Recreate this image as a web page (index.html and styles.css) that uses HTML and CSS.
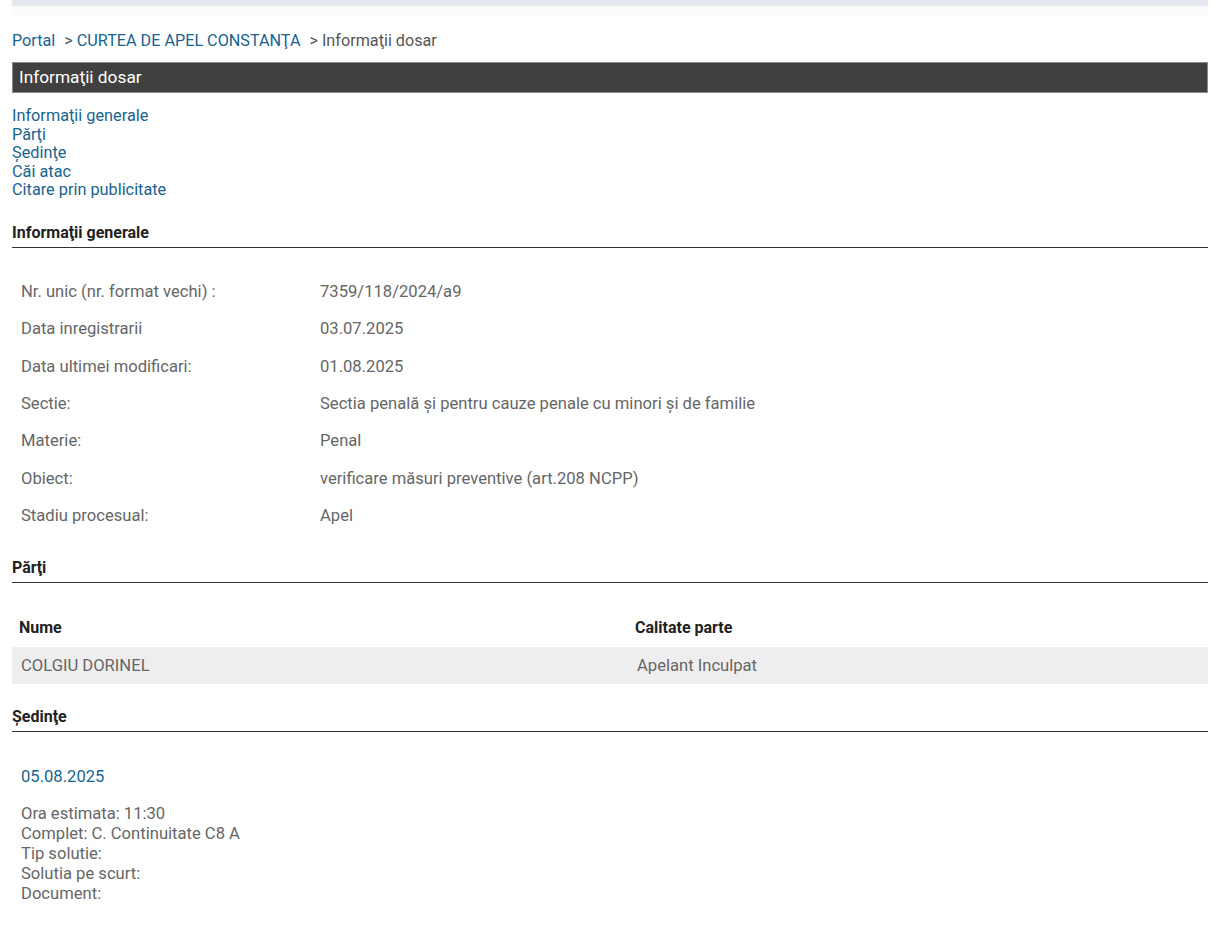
FILE: index.html
```html
<!DOCTYPE html>
<html lang="ro">
<head>
    <meta charset="UTF-8">
    <meta name="viewport" content="width=device-width, initial-scale=1.0">
    <title>Informaţii dosar</title>
    <link rel="stylesheet" href="styles.css">
</head>
<body>
    <div class="top-bar"></div>
    <div class="top-strip"></div>

    <div class="breadcrumb">
        <a href="#">Portal</a>
        <span class="sep">&gt;</span> <a href="#">CURTEA DE APEL CONSTANŢA</a>
        <span class="sep">&gt;</span> <span class="current">Informaţii dosar</span>
    </div>

    <div class="page-title">Informaţii dosar</div>

    <ul class="toc">
        <li><a href="#generale">Informaţii generale</a></li>
        <li><a href="#parti">Părţi</a></li>
        <li><a href="#sedinte">Şedinţe</a></li>
        <li><a href="#cai">Căi atac</a></li>
        <li><a href="#citare">Citare prin publicitate</a></li>
    </ul>

    <!-- Informatii generale -->
    <h3 class="section-title" id="generale">Informaţii generale</h3>
    <table class="info-table">
        <tr><td class="label">Nr. unic (nr. format vechi) :</td><td>7359/118/2024/a9</td></tr>
        <tr><td class="label">Data inregistrarii</td><td>03.07.2025</td></tr>
        <tr><td class="label">Data ultimei modificari:</td><td>01.08.2025</td></tr>
        <tr><td class="label">Sectie:</td><td>Sectia penală și pentru cauze penale cu minori și de familie</td></tr>
        <tr><td class="label">Materie:</td><td>Penal</td></tr>
        <tr><td class="label">Obiect:</td><td>verificare măsuri preventive (art.208 NCPP)</td></tr>
        <tr><td class="label">Stadiu procesual:</td><td>Apel</td></tr>
    </table>

    <!-- Parti -->
    <h3 class="section-title" id="parti">Părţi</h3>
    <table class="parti-table">
        <tr><th>Nume</th><th>Calitate parte</th></tr>
        <tr class="odd"><td>COLGIU DORINEL</td><td>Apelant Inculpat</td></tr>
    </table>

    <!-- Sedinte -->
    <h3 class="section-title" id="sedinte">Şedinţe</h3>
    <div class="sedinta">
        <div class="sedinta-date">05.08.2025</div>
        <div class="sedinta-info">
            Ora estimata: 11:30<br>
            Complet: C. Continuitate C8 A<br>
            Tip solutie:<br>
            Solutia pe scurt:<br>
            Document:
        </div>
    </div>
</body>
</html>
```

FILE: styles.css
```css
body {
    font-family: Roboto, 'Noto Sans', sans-serif;
    font-size: 16px;
    color: #666;
    background-color: #fff;
    margin: 0 12px;
    padding: 0;
}

a {
    color: #17648f;
    text-decoration: none;
}

.top-bar {
    height: 6px;
    background-color: #e4e7ed;
}

.top-strip {
    height: 11px;
    background-color: #fafbfa;
}

.breadcrumb {
    margin-top: 14px;
    line-height: 20px;
    font-size: 16.2px;
}

.breadcrumb .sep {
    margin-left: 5px;
    color: #555;
}

.breadcrumb .current {
    color: #555;
}

.page-title {
    margin-top: 11px;
    height: 29px;
    line-height: 29px;
    background-color: #404040;
    border: 1px solid #8a8a8a;
    color: #fff;
    font-size: 17.3px;
    padding-left: 6px;
}

.toc {
    list-style: none;
    margin: 14px 0 0 0;
    padding: 0;
    line-height: 18.6px;
    font-size: 16.3px;
}

.section-title {
    margin: 23px 0 0 0;
    font-size: 16px;
    font-weight: 700;
    color: #222;
    line-height: 20px;
    padding-bottom: 4px;
    border-bottom: 1px solid #333;
}

.info-table {
    width: 100%;
    border-collapse: collapse;
    margin-top: 25px;
    font-size: 16.6px;
}

.info-table td {
    padding: 0 9px;
    height: 37.3px;
    vertical-align: middle;
}

.info-table td.label {
    width: 281px;
}

.parti-table {
    width: 100%;
    border-collapse: collapse;
    margin-top: 25px;
    font-size: 16.6px;
}

.parti-table th {
    text-align: left;
    font-weight: 700;
    font-size: 16px;
    color: #222;
    padding: 0 7px;
    height: 39px;
}

.parti-table th:first-child {
    width: 602px;
}

.parti-table td {
    padding: 0 9px;
    height: 37px;
}

.parti-table tr.odd {
    background-color: #eee;
}

#parti {
    margin-top: 24px;
}

#sedinte {
    margin-top: 23px;
}

.sedinta {
    padding: 0 9px;
    font-size: 16.6px;
}

.sedinta-date {
    margin-top: 35px;
    color: #17648f;
    line-height: 20px;
}

.sedinta-info {
    margin-top: 17px;
    line-height: 20px;
}
```
